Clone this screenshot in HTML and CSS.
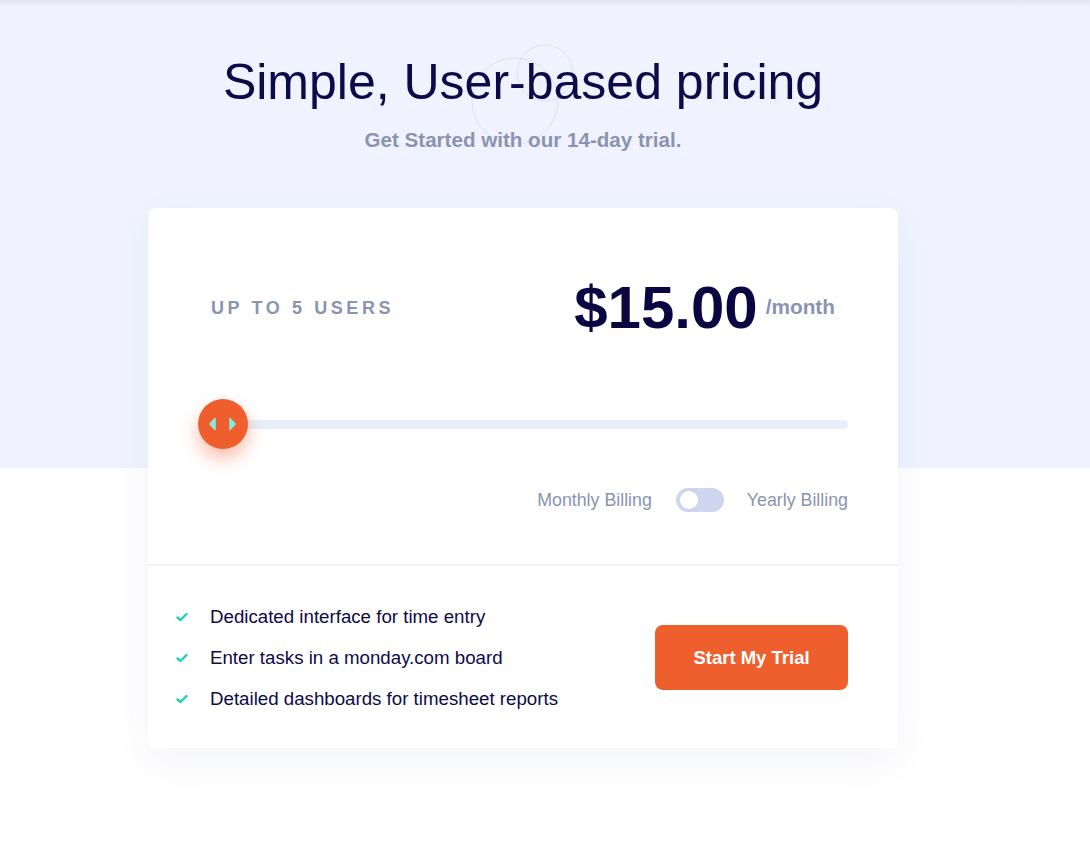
FILE: index.html
```html
<!DOCTYPE html>
<html lang="en">
<head>
<meta charset="utf-8">
<title>Pricing</title>
<link rel="stylesheet" href="styles.css">
</head>
<body>
<div class="page">
  <header class="hero">
    <svg class="deco" width="120" height="120" viewBox="0 0 120 120" aria-hidden="true">
      <circle cx="44" cy="57" r="43" fill="none" stroke="#dcdfee" stroke-width="1"/>
      <circle cx="74" cy="29" r="28" fill="none" stroke="#dcdfee" stroke-width="1"/>
    </svg>
    <h1 class="title">Simple, User-based pricing</h1>
    <p class="subtitle">Get Started with our 14-day trial.</p>
  </header>

  <section class="card">
    <div class="card-top">
      <div class="price-row">
        <span class="users">UP TO 5 USERS</span>
        <div class="price">
          <span class="amount">$15.00</span>
          <span class="period">/month</span>
        </div>
      </div>
      <div class="slider">
        <div class="track"></div>
        <div class="thumb">
          <svg width="50" height="50" viewBox="0 0 50 50" aria-hidden="true">
            <path d="M17 19.5 L12 25 L17 30.5 Z" fill="#7ff0dc" stroke="#7ff0dc" stroke-width="1.5" stroke-linejoin="round"/>
            <path d="M32 19.5 L37 25 L32 30.5 Z" fill="#7ff0dc" stroke="#7ff0dc" stroke-width="1.5" stroke-linejoin="round"/>
          </svg>
        </div>
      </div>
      <div class="billing">
        <span class="bill-label">Monthly Billing</span>
        <span class="toggle"><span class="knob"></span></span>
        <span class="bill-label">Yearly Billing</span>
      </div>
    </div>
    <div class="card-bottom">
      <ul class="features">
        <li><svg class="check" width="12" height="10" viewBox="0 0 12 10" aria-hidden="true"><path d="M1.5 5.5 L4.5 8 L10.5 2" fill="none" stroke="#22d1b2" stroke-width="2.4" stroke-linecap="round" stroke-linejoin="round"/></svg>Dedicated interface for time entry</li>
        <li><svg class="check" width="12" height="10" viewBox="0 0 12 10" aria-hidden="true"><path d="M1.5 5.5 L4.5 8 L10.5 2" fill="none" stroke="#22d1b2" stroke-width="2.4" stroke-linecap="round" stroke-linejoin="round"/></svg>Enter tasks in a monday.com board</li>
        <li><svg class="check" width="12" height="10" viewBox="0 0 12 10" aria-hidden="true"><path d="M1.5 5.5 L4.5 8 L10.5 2" fill="none" stroke="#22d1b2" stroke-width="2.4" stroke-linecap="round" stroke-linejoin="round"/></svg>Detailed dashboards for timesheet reports</li>
      </ul>
      <button class="cta">Start My Trial</button>
    </div>
  </section>
</div>
</body>
</html>
```

FILE: styles.css
```css
* { box-sizing: border-box; }

html, body {
  margin: 0;
  padding: 0;
  background: #ffffff;
}

body {
  font-family: "Liberation Sans", Arial, sans-serif;
  color: #0d0a4a;
}

.page {
  min-height: 858px;
  padding-bottom: 110px;
  background:
    linear-gradient(to bottom, rgba(40, 44, 90, 0.07), rgba(40, 44, 90, 0) 7px),
    linear-gradient(to bottom, #f0f3ff 0, #f0f3ff 468px, #ffffff 468px);
}

.hero {
  position: relative;
  width: 750px;
  margin-left: 148px;
  padding-top: 52px;
  text-align: center;
}

.deco {
  position: absolute;
  left: 323px;
  top: 44px;
  pointer-events: none;
}

.title {
  position: relative;
  margin: 0;
  font-size: 50px;
  line-height: 60px;
  font-weight: 400;
  color: #0d0a4a;
}

.subtitle {
  position: relative;
  margin: 16px 0 0;
  font-size: 20.6px;
  line-height: 24px;
  font-weight: 700;
  color: #8a94b0;
}

.card {
  width: 750px;
  margin: 56px 0 0 148px;
  background: #ffffff;
  border-radius: 8px;
  box-shadow: 0 12px 40px rgba(50, 60, 130, 0.06);
}

.card-top {
  padding: 68px 50px 52px 50px;
  border-bottom: 2px solid #f1f3f9;
}

.price-row {
  display: flex;
  align-items: center;
  justify-content: space-between;
  height: 64px;
  padding: 0 13px;
}

.users {
  font-size: 18px;
  font-weight: 700;
  letter-spacing: 3.6px;
  color: #8a94b0;
}

.price {
  display: flex;
  align-items: center;
  gap: 8px;
}

.amount {
  font-size: 60px;
  line-height: 64px;
  font-weight: 700;
  color: #0a0642;
}

.period {
  font-size: 20.8px;
  font-weight: 700;
  color: #8a94b0;
  margin-bottom: 2px;
}

.slider {
  position: relative;
  margin-top: 59px;
  height: 50px;
  display: flex;
  align-items: center;
}

.track {
  flex: 1;
  height: 9px;
  margin-left: 2px;
  border-radius: 5px;
  background: #eaeefa;
}

.thumb {
  position: absolute;
  left: 0;
  top: 0;
  width: 50px;
  height: 50px;
  border-radius: 50%;
  background: #ef5f2d;
  box-shadow: 0 9px 18px rgba(240, 96, 46, 0.42);
}

.thumb svg { display: block; }

.billing {
  margin-top: 39px;
  display: flex;
  justify-content: flex-end;
  align-items: center;
  height: 24px;
}

.bill-label {
  font-size: 17.8px;
  color: #8a94b0;
}

.toggle {
  position: relative;
  width: 48px;
  height: 24px;
  margin: 0 23px 0 24px;
  border-radius: 12px;
  background: #cdd6ee;
}

.knob {
  position: absolute;
  left: 4px;
  top: 3px;
  width: 18px;
  height: 18px;
  border-radius: 50%;
  background: #ffffff;
}

.card-bottom {
  display: flex;
  align-items: center;
  justify-content: space-between;
  padding: 30px 50px 29px 28px;
}

.features {
  list-style: none;
  margin: 0;
  padding: 0;
}

.features li {
  display: flex;
  align-items: center;
  height: 41px;
  font-size: 18.7px;
  color: #0d0a4a;
}

.check {
  margin-right: 22px;
  flex: none;
}

.cta {
  width: 193px;
  height: 65px;
  border: 0;
  border-radius: 8px;
  background: #ef5f2d;
  color: #ffffff;
  font-family: "Liberation Sans", Arial, sans-serif;
  font-size: 18.5px;
  font-weight: 700;
  cursor: pointer;
}
```
